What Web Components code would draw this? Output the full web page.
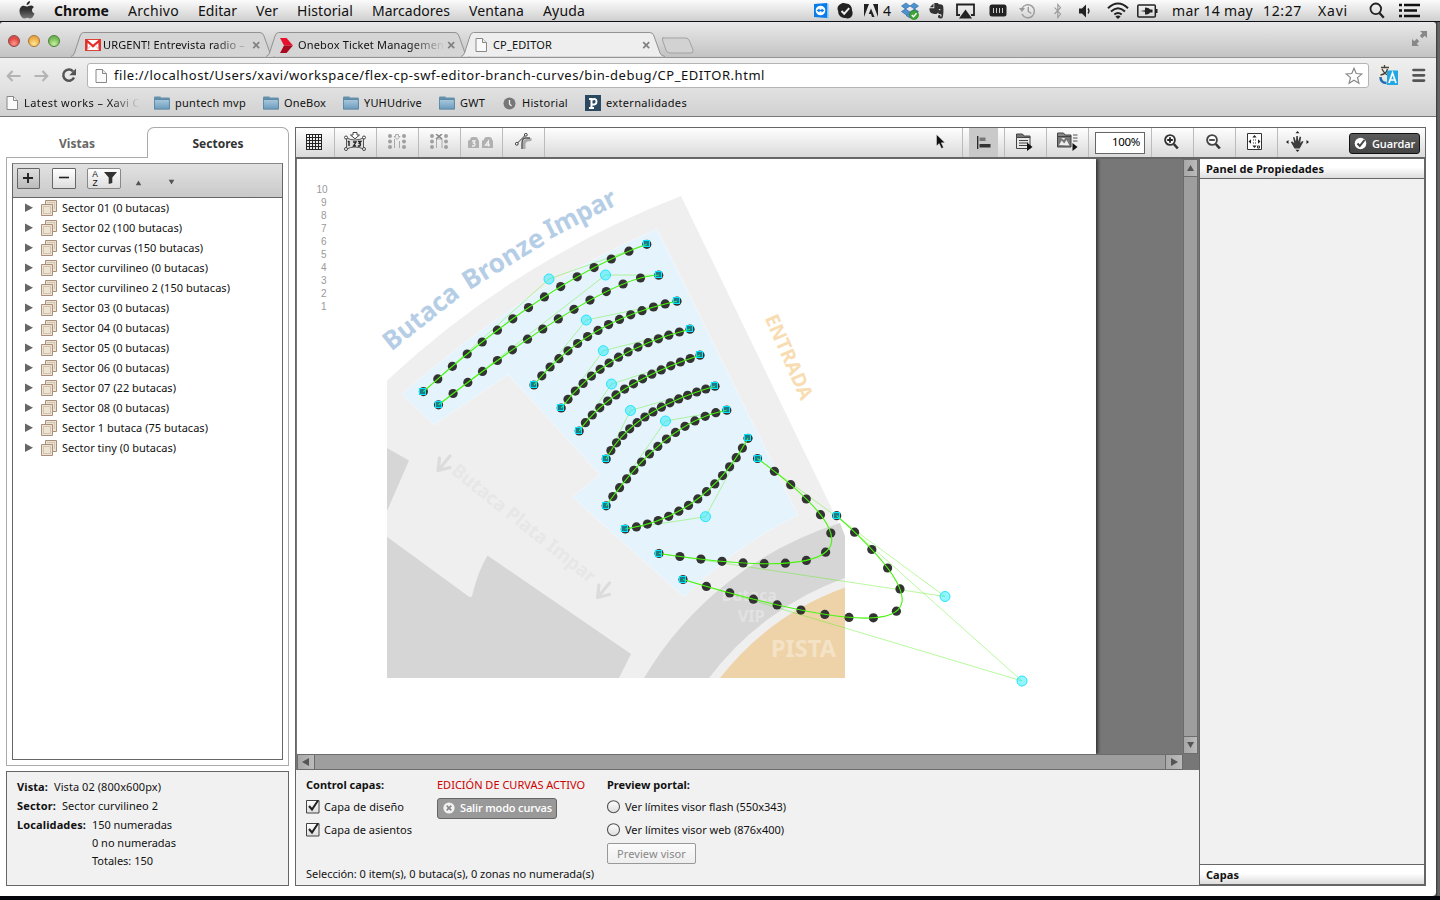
<!DOCTYPE html>
<html lang="es">
<head>
<meta charset="utf-8">
<title>CP_EDITOR</title>
<style>
html,body{margin:0;height:100%;overflow:hidden;background:#04060c}
</style>
</head>
<body>
<desk-top></desk-top>
<script>
const LUCIDA = '"Noto Sans","Open Sans",sans-serif';
function define(name, html, setup) {
  const tpl = document.createElement('template');
  tpl.innerHTML = html;
  customElements.define(name, class extends HTMLElement {
    connectedCallback() {
      if (this.shadowRoot) return;
      this.attachShadow({mode: 'open'}).appendChild(tpl.content.cloneNode(true));
      if (setup) setup(this, this.shadowRoot);
    }
  });
}

/* Text label with a fixed advance width: tracking is adjusted to fill it. */
customElements.define('t-x', class extends HTMLElement {
  connectedCallback() {
    if (this.shadowRoot) return;
    const r = this.attachShadow({mode: 'open'});
    r.innerHTML = '<style>:host{display:block;flex:none;white-space:pre;line-height:16px}span{display:inline-block}</style><span></span>';
    const s = r.querySelector('span');
    s.textContent = this.getAttribute('t');
    const w = +this.getAttribute('w');
    if (w) {
      this.style.width = w + 'px';
      const m = s.getBoundingClientRect().width;
      s.style.letterSpacing = ((w - m) / s.textContent.length).toFixed(3) + 'px';
    }
  }
});

const ICONS = {
  apple: [16,18,'<defs><linearGradient id="g" x2="0" y2="1"><stop offset="0" stop-color="#222"/><stop offset=".5" stop-color="#333"/><stop offset="1" stop-color="#777"/></linearGradient></defs><path fill="url(#g)" d="M11 0c.3 2-1.400 4-3.400 4.100C7.300 2.300 9 .4 11 0zM14.800 6.200c-2.700 1.700-2.200 5.100.7 6.300-.7 2.100-2.200 5-3.900 5-1.300 0-1.700-.8-3.300-.8s-2.100.8-3.300.8C3 17.500.5 13.500.5 10c0-3.300 2-5.300 4.200-5.300 1.500 0 2.500.9 3.600.9 1 0 2.200-1.100 4-1 1.100.1 2 .6 2.500 1.600z"/>'],
  team: [15,16,'<path fill="#0b7bea" d="M0 1l13-1v15l-13-1z"/><path fill="#7cc4ff" d="M13 0l1.500 1v15l-1.500-1z"/><circle cx="6.500" cy="7.500" r="4.800" fill="#fff"/><path fill="#0b7bea" d="M2.500 7.500l3-2v1.300h2V5.500l3 2-3 2V8.200h-2v1.300z"/>'],
  skype: [16,16,'<path fill="#222" d="M4.500.5c2-.9 3.500-.2 4.500 0 4 .2 6.300 3.500 6 7 .9 2 .9 4-.5 6-2 2.500-4.500 2-6 1.500C4 15 1 12 1.200 8.300-.3 5.500.5 2 4.500.5z"/><path d="M4.500 8l2.700 2.700 5-5.500" fill="none" stroke="#eee" stroke-width="2"/>'],
  adobe: [14,14,'<path fill="#222" d="M0 0h5L0 13zM9 0h5v13zM7 4.500L10.500 13H8l-1-3H4.700z"/>'],
  drop: [18,18,'<path fill="#4b93d1" stroke="#27629c" stroke-width=".6" d="M5 1l4 3-4.500 3L.5 4zM13 1l-4 3 4.500 3 4-3zM.5 9.500l4-2.500L9 10l-4 2.800zM17.500 9.500l-4-2.500L9 10l4 2.800zM5 13.500l4-2.700 4 2.700-4 2.500z"/><circle cx="13" cy="13" r="4.500" fill="#3fa535" stroke="#2a7a22" stroke-width=".6"/><path d="M10.800 13l1.700 1.700 3-3.400" fill="none" stroke="#fff" stroke-width="1.400"/>'],
  ever: [15,16,'<path fill="#333" d="M4.500.5L.8 4.300h3.700zM5.300 0h3.500l1 1.300c4 .2 4.400 1 4.500 3 .3 3 .1 7-.5 9.700-.5 2-4.500 2.100-4.800.1-.1-1.600.5-2.300 2.200-2.100v1.500h1.200c.4-1.500 0-2.500-1.400-2.600-1.300 0-1.500-.4-2-1.500-.8 1.600-2.500 1.700-4.500 1.300C1.500 10.300.5 9 .4 5.200h4.900z"/><path fill="#ddd" d="M9.800 6q1.500-.3 2 1.200-1-.4-2 0z"/>'],
  air: [19,16,'<path d="M4 12H1V1.500h17V12h-3" fill="none" stroke="#222" stroke-width="1.800"/><path fill="#222" d="M9.500 6.500l6.500 9H3z"/>'],
  mem: [18,15,'<rect x=".5" y="1.500" width="17" height="12" rx="2.500" fill="#222"/><path d="M4.500 5v5M7.500 5v5M10.500 5v5M13.500 5v5" stroke="#ccc" stroke-width="1"/>'],
  time: [17,16,'<path d="M3 5.500A6.500 6.500 0 1 1 3 11M9.300 4v4.500l3 2" fill="none" stroke="#999" stroke-width="1.400"/><path fill="#999" d="M0 5h6L3 9z"/>'],
  blue: [8,16,'<path d="M.5 4.500l6 6.500-2.700 3.500V1.500l2.700 3.200-6 6.300" fill="none" stroke="#999" stroke-width="1.100"/>'],
  vol: [12,14,'<path fill="#222" d="M0 4.500h3L7 .5v13l-4-4H0z"/><path d="M9 4.500q2 2.500 0 5" fill="none" stroke="#222" stroke-width="1.300"/>'],
  wifi: [22,17,'<path d="M1 6.300q10-9.500 20 0M4 9.500q7-6.500 14 0M7.300 12.600q3.700-3.300 7.400 0" fill="none" stroke="#222" stroke-width="2"/><path fill="#222" d="M11 17l-2.600-2.500q2.600-2 5.200 0z"/>'],
  batt: [21,14,'<rect x=".8" y="1" width="17.500" height="12" rx="1" fill="none" stroke="#222" stroke-width="1.500"/><path fill="#222" d="M19 5h1.500v4H19zM3.500 7l4.500-.8V3.500q4 0 5 2h2.500v3H13q-1 2-5 2V7.800z"/>'],
  srch: [16,17,'<circle cx="6.800" cy="6.800" r="5.300" fill="none" stroke="#222" stroke-width="1.800"/><path d="M10.500 11l4.300 4.800" stroke="#222" stroke-width="2.300"/>'],
  list: [21,15,'<path d="M0 2h3M0 7.500h3M0 13h3M5 2h16M5 7.500h13M5 13h16" stroke="#111" stroke-width="2.600"/>'],
  gmail: [16,12,'<rect x=".5" y=".5" width="15" height="11" fill="#fff" stroke="#d9443a"/><path d="M1.500 11.500V1.500L8 7.200l6.500-5.700v10" fill="none" stroke="#e0302d" stroke-width="2.200"/><path d="M2 11l4-5M14 11l-4-5" stroke="#f3b5b0"/>'],
  one: [13,15,'<path fill="#e8112d" d="M0 0h6.500L13 7.500H4z"/><path fill="#a80a22" d="M0 15h6.500L13 7.500H4z"/>'],
  page: [12,14,'<path fill="#fafafa" stroke="#888" d="M1 .5h6.500l4 4v9H1z"/><path fill="#eee" stroke="#888" d="M7.500.5v4h4"/>'],
  x: [9,9,'<path d="M1.200 1.200l6 6M7.200 1.200l-6 6" stroke="#808080" stroke-width="1.700"/>'],
  back: [15,12,'<path d="M6.500 1L1.800 6l4.700 5M2 6h12.500" fill="none" stroke="#b4b4b4" stroke-width="2.200"/>'],
  fwd: [15,12,'<path d="M8.500 1l4.700 5-4.700 5M13 6H.5" fill="none" stroke="#b4b4b4" stroke-width="2.200"/>'],
  reload: [16,15,'<path d="M12 3.300A5.600 5.600 0 1 0 13 9.500" fill="none" stroke="#555" stroke-width="2.500"/><path fill="#555" d="M15 .5v6.800H8.300z"/>'],
  star: [18,18,'<path fill="#fff" stroke="#888" stroke-width="1.200" d="M9 1.200l2.200 5.300 5.700.4-4.400 3.700 1.400 5.600L9 13.200l-4.900 3 1.400-5.600L1.100 6.900l5.700-.4z"/>'],
  trans: [19,21,'<path fill="#f0ece2" d="M0 0h11v13H0z"/><path d="M2 2.500h8M5.500 0v3M3 4q3 6 7 6M8.500 4q-1 5-7 6" fill="none" stroke="#444" stroke-width="1.300"/><path fill="#20a8e4" d="M8 5.500h11V20H8z"/><path d="M10 18l3.500-10 3.500 10M11.200 15h4.600" fill="none" stroke="#fff" stroke-width="1.700"/><path d="M1.500 12q0 6 6 6" fill="none" stroke="#2070b0" stroke-width="2.500"/>'],
  burger: [14,15,'<path d="M1.500 2h10.500M1.500 7.300h10.500M1.500 12.600h10.500" stroke="#555" stroke-width="2.700" stroke-linecap="round"/>'],
  full: [15,15,'<path fill="#888" d="M8 0h7v7l-2.300-2.300-2.500 2.500L7.800 4.800l2.500-2.500zM0 8v7h7l-2.300-2.300 2.500-2.500-2.400-2.400-2.500 2.500z"/>'],
  folder: [16,14,'<defs><linearGradient id="g" x2="0" y2="1"><stop offset="0" stop-color="#a9c9de"/><stop offset="1" stop-color="#6c9cbd"/></linearGradient></defs><path fill="#6691ad" d="M0 1.500Q0 .5 1 .5h5q.8 0 1 1h8q.8 0 .8.800V13H0z"/><path fill="url(#g)" stroke="#55809d" stroke-width=".8" d="M.4 3.500h15v9.700H.4z"/>'],
  clock: [13,13,'<circle cx="6.500" cy="6.500" r="6" fill="#777"/><path d="M6.500 3v4l2 2" fill="none" stroke="#eee" stroke-width="1.300"/>'],
  pin: [16,16,'<path fill="#2b4a60" d="M0 0h16v16H0z"/><path fill="none" stroke="#fff" stroke-width="2" d="M4 4h2.500v8.500M4 13h5M6.500 5q5-2.500 5 1.500t-5 2.800"/>'],
  stack: [16,16,'<g stroke="#a98f7b" fill="#ece3d3"><path d="M4.500.5h11v11h-11z"/><path d="M.5 4.500h11v11H.5z"/></g><path d="M6.500 2.500h7v7M2.500 6.500h7v7h-7z" fill="none" stroke="#b9a48c" stroke-dasharray="1 1"/>'],
  grid: [16,16,'<path d="M.5 0v16M3.500 0v16M6.500 0v16M9.500 0v16M12.500 0v16M15.500 0v16M0 .5h16M0 3.500h16M0 6.500h16M0 9.500h16M0 12.500h16M0 15.500h16" stroke="#222"/>'],
  num: [22,19,'<path d="M9 .5h4v2.500h2.500L11 6.800 6.500 3H9z" fill="#fff" stroke="#444"/><path d="M2.500 6Q11 10 19.500 6v11Q11 13 2.500 17z" fill="#ddd" stroke="#555"/><path d="M5 9v5M4 10l1-1M9 10h3l-2.500 4H12M14 9.500h2.800l-1.500 1.800q2 .5.500 2.700h-2" fill="none" stroke="#222" stroke-width="1.400"/><g fill="#fff" stroke="#444"><circle cx="2" cy="5.500" r="1.500"/><circle cx="20" cy="5.500" r="1.500"/><circle cx="2" cy="17" r="1.500"/><circle cx="20" cy="17" r="1.500"/></g>'],
  cola: [18,15,'<g fill="#a0a0a0"><circle cx="2" cy="2" r="2"/><circle cx="2" cy="7.500" r="2"/><circle cx="2" cy="13" r="2"/><circle cx="16" cy="2" r="2"/><circle cx="16" cy="7.500" r="2"/><circle cx="16" cy="13" r="2"/></g><path d="M6.500 14V5M11.500 14V7M7.500.5h3v2H12L9 5.500 6 2.500h1.500z" fill="#eee" stroke="#aaa"/>'],
  colx: [18,15,'<g fill="#a0a0a0"><circle cx="2" cy="2" r="2"/><circle cx="2" cy="7.500" r="2"/><circle cx="2" cy="13" r="2"/><circle cx="16" cy="2" r="2"/><circle cx="16" cy="7.500" r="2"/><circle cx="16" cy="13" r="2"/></g><path d="M6.500 14V5h5.500v9" fill="none" stroke="#aaa"/><path d="M6 0l6 5M12 0L6 5" stroke="#888" stroke-width="1.600"/>'],
  seats: [25,12,'<path fill="#b0b0b0" d="M2 3q0-3 3-3h2q3 0 3 3 1 0 1 1v7H0V4q0-1 2-1zM16 3q0-3 3-3h2q3 0 3 3 1 0 1 1v7H14V4q0-1 2-1z"/><path d="M4 4h3L5.500 6q3 .5.500 3H4M20.500 9.500V4L17.500 8h4.500" fill="none" stroke="#eee" stroke-width="1.300"/>'],
  curve: [17,17,'<path d="M9 16V11q0-4.500 7.500-4.500" fill="none" stroke="#aaa" stroke-width="3"/><path d="M7 16v-5Q7 5.500 10 5h5" fill="none" stroke="#555" stroke-width="1.400"/><path d="M2 10.500L10.500 2" stroke="#333"/><circle cx="1.800" cy="10.800" r="1.400" fill="#fff" stroke="#333"/><circle cx="10.800" cy="1.800" r="1.400" fill="#fff" stroke="#333"/>'],
  cursor: [9,15,'<path fill="#111" stroke="#fff" stroke-width=".4" d="M.5.5v11.500l2.700-2.500L5.500 14.500l2-.9-2.200-4.800H9z"/>'],
  align: [14,13,'<path d="M.7 0v13" stroke="#222" stroke-width="1.300"/><path d="M2.500 1.500h6v3.500h-6z" fill="#777"/><path d="M2.500 8h11v3.500h-11z" fill="#333"/>'],
  lst: [17,18,'<path fill="#777" stroke="#444" d="M.5 1h6l1.500 2h6v2H.5z"/><path fill="#e8e8e8" stroke="#444" d="M.5 4.500h13.500v11H.5z"/><path d="M3 7.500h9M3 10h9M3 12.500h9" stroke="#444" stroke-width="1.200"/><path fill="#111" d="M11 9.500l5.500 4.500-5.500 4z"/>'],
  img: [21,19,'<path fill="#888" stroke="#444" d="M.5 1h6L8 3h6v2H.5z"/><path fill="#777" stroke="#444" d="M.5 4.500H14v10.500H.5z"/><path fill="#eee" d="M2 13l2.700-4.500 2.500 3L9.500 8l3 5.500zM4 6h4l-1 2z"/><path d="M16 3h4.500M16 6h4.500M16 9h4.500" stroke="#555"/><path fill="#111" d="M15.500 11l5 4-5 4z"/>'],
  zin: [15,16,'<circle cx="6" cy="6" r="4.900" fill="#fff" stroke="#333" stroke-width="1.900"/><path d="M6 3.200v5.600M3.200 6h5.600" stroke="#222" stroke-width="1.800"/><path d="M9.800 10l4 4.500" stroke="#333" stroke-width="2.600"/>'],
  zout: [15,16,'<circle cx="6" cy="6" r="4.900" fill="#fff" stroke="#444" stroke-width="1.900"/><path d="M3.200 6h5.600" stroke="#222" stroke-width="1.600"/><path d="M9.800 10l4 4.500" stroke="#333" stroke-width="2.600"/>'],
  fit: [15,17,'<path d="M.5.5h14v16H.5z" fill="#fff" stroke="#333"/><path d="M7.500 2L5.300 4.500h4.400zM7.500 15l-2.200-2.500h4.400zM1.500 8.500L4 6.300v4.400zM13.500 8.500L11 6.300v4.400z" fill="#222"/><path d="M6 7h1M8 7h1M6 10h1M8 10h1" stroke="#333" fill="none"/><path d="M10.500 13h2v2h-2z" fill="#fff" stroke="#333"/>'],
  hand: [23,21,'<path fill="#3c3c3c" d="M8.500 17.500L4.800 11l1.700-.5 1.800 1.800-1.300-6 1.300-.3 1.700 4.500.3-5.500h1.500l.4 5.500 1.500-5 1.400.4-.9 6 2-2 1.300.7-3.800 7z"/><path fill="#222" d="M11.500 0l2 2.200h-4zM11.500 21l2-2.200h-4zM0 11l2.500-2v4zM23 11l-2.500-2v4z"/>'],
  ok: [13,13,'<circle cx="6.500" cy="6.500" r="5.800" fill="#fff"/><path d="M3.500 6.500l2.300 2.500 4.700-6" fill="none" stroke="#444" stroke-width="2"/>'],
  no: [12,12,'<circle cx="6" cy="6" r="5.600" fill="#f2f2f2"/><path d="M3.700 3.700l4.600 4.600M8.300 3.700L3.700 8.300" stroke="#888" stroke-width="1.700"/>'],
  plus: [11,11,'<path d="M5 0v10M0 5h10" stroke="#222" stroke-width="1.900"/>'],
  minus: [11,11,'<path d="M0 4.500h10" stroke="#222" stroke-width="1.600"/>'],
  funnel: [13,12,'<path fill="#333" d="M0 0h13L8.300 5.500v5.500L4.700 12V5.500z"/>'],
  check: [15,15,'<defs><linearGradient id="g" x2="0" y2="1"><stop offset="0" stop-color="#fff"/><stop offset="1" stop-color="#ddd"/></linearGradient></defs><path d="M.5 1.500h12.500v12.500H.5z" fill="url(#g)" stroke="#444"/><path d="M3 7l3 3.500L12 1.500" fill="none" stroke="#222" stroke-width="2"/>'],
  radio: [14,14,'<defs><linearGradient id="g" x2="0" y2="1"><stop offset="0" stop-color="#fff"/><stop offset="1" stop-color="#ddd"/></linearGradient></defs><circle cx="6.500" cy="6.700" r="6" fill="url(#g)" stroke="#555" stroke-width="1.100"/>'],
  right: [8,10,'<path fill="#666" d="M0 .5l8 4.200L0 9z"/>'],
  up: [7,6,'<path fill="#555" d="M3.500 0L7 6H0z"/>'],
  down: [7,6,'<path fill="#555" d="M3.500 6L7 0H0z"/>'],
  left: [8,8,'<path fill="#555" d="M7 0v8L0 4z"/>'],
  rt: [8,8,'<path fill="#555" d="M1 0v8l7-4z"/>']
};
customElements.define('i-x', class extends HTMLElement {
  connectedCallback() {
    if (this.shadowRoot) return;
    const [w, h, s] = ICONS[this.getAttribute('n')];
    this.attachShadow({mode: 'open'}).innerHTML =
      `<style>:host{display:block;flex:none;width:${w}px;height:${h}px}svg{display:block}</style><svg width="${w}" height="${h}" viewBox="0 0 ${w} ${h}">${s}</svg>`;
  }
});

/* ---- macOS menu bar ---- */
define('menu-bar', `<style>
:host{display:flex;align-items:center;height:21px;border-bottom:1px solid #0c1016;background:linear-gradient(#fbfbfb,#cfcfcf);font:14px ${LUCIDA};color:#111;box-sizing:content-box}
nav{display:flex;gap:19px;margin-left:19px}
aside{display:flex;align-items:center;flex:1}
</style>
<i-x n="apple" style="margin:0 0 1px 19px"></i-x>
<nav><t-x t="Chrome" w="55" style="font-weight:700"></t-x><t-x t="Archivo" w="51"></t-x><t-x t="Editar" w="39"></t-x><t-x t="Ver" w="22"></t-x><t-x t="Historial" w="56"></t-x><t-x t="Marcadores" w="78"></t-x><t-x t="Ventana" w="55"></t-x><t-x t="Ayuda" w="42"></t-x></nav>
<aside>
<i-x n="team" style="margin-left:229px"></i-x><i-x n="skype" style="margin-left:8px"></i-x><i-x n="adobe" style="margin-left:11px"></i-x><t-x t="4" w="8" style="margin-left:5px"></t-x>
<i-x n="drop" style="margin-left:10px"></i-x><i-x n="ever" style="margin-left:10px"></i-x><i-x n="air" style="margin-left:12px"></i-x><i-x n="mem" style="margin-left:14px"></i-x><i-x n="time" style="margin-left:12px"></i-x><i-x n="blue" style="margin-left:18px"></i-x><i-x n="vol" style="margin-left:17px"></i-x><i-x n="wifi" style="margin-left:16px"></i-x><i-x n="batt" style="margin-left:8px"></i-x>
<t-x t="mar 14 may" w="81" style="margin-left:14px"></t-x><t-x t="12:27" w="39" style="margin-left:10px"></t-x><t-x t="Xavi" w="30" style="margin-left:16px"></t-x>
<i-x n="srch" style="margin-left:21px"></i-x><i-x n="list" style="margin-left:14px"></i-x>
</aside>`);

/* ---- browser ---- */
define('browser-tab', `<style>
:host{display:block;position:relative;flex:none;width:204px;height:25px;margin-right:-9px;font:11px ${LUCIDA};color:#111}
:host([active]){z-index:2;height:26px;margin-bottom:-1px}
svg{position:absolute;inset:0}
div{position:relative;display:flex;align-items:center;height:24px;padding-top:1px}
.i{width:18px;margin-left:14px;display:flex}
.t{width:147px;margin-right:2px}
:host([fade]) .t{-webkit-mask:linear-gradient(90deg,#000 76%,transparent 100%)}
</style><svg width="204" height="26"><path d="M0 24.500Q2.500 24 3.500 21L9 4Q10 .5 12.500.5H189Q192 .5 193 4L199 21Q200 24 204 24.500" stroke="#929292"/></svg><div><span class="i"></span><span class="t"></span><i-x n="x"></i-x></div>`,
(h, r) => {
  const p = r.querySelector('path'), a = h.hasAttribute('active');
  p.setAttribute('fill', a ? '#eeeeee' : '#d5d5d5');
  r.querySelector('.i').innerHTML = `<i-x n="${h.getAttribute('icon')}"></i-x>`;
  r.querySelector('.t').innerHTML = `<t-x t="${h.getAttribute('t')}" w="${h.getAttribute('w')}"></t-x>`;
});
define('tab-strip', `<style>
:host{display:flex;align-items:flex-end;height:35px;border-bottom:1px solid #949494;background:linear-gradient(#e9e9e9,#c3c3c3);border-radius:4px 4px 0 0;position:relative}
.l{display:flex;gap:8px;margin:0 11px 10px 8px}
.l i{width:12px;height:12px;border-radius:50%;box-sizing:border-box;border:1px solid #8a4a45;background:radial-gradient(circle at 50% 75%,#ff9a90,#e0453e 60%,#c66)}
.l i:nth-child(2){border-color:#a5752c;background:radial-gradient(circle at 50% 80%,#ffe79a,#efae48 60%,#dfa050)}
.l i:nth-child(3){border-color:#4c7f38;background:radial-gradient(circle at 50% 80%,#c8f0a0,#78bd58 60%,#6aa550)}
.n{margin:0 0 3px 5px}
.f{margin:0 9px 11px auto}
browser-tab{align-self:flex-end}
</style><div class="l"><i></i><i></i><i></i></div>
<browser-tab icon="gmail" t="URGENT! Entrevista radio –" w="142" fade></browser-tab><browser-tab icon="one" t="Onebox Ticket Managemen" w="146" fade></browser-tab><browser-tab active icon="page" t="CP_EDITOR" w="59"></browser-tab>
<svg class="n" width="34" height="17"><path d="M1.500 1h23q3 0 4 3l3.500 9q1 3-2 3H9q-3 0-4-3L1.500 3Q1 1 2.500 1z" fill="#d2d2d2" stroke="#a2a2a2"/></svg>
<i-x class="f" n="full"></i-x>`);
define('nav-bar', `<style>
:host{display:block;height:58px;background:linear-gradient(#f0f0f0,#e2e2e2 50%,#d1d1d1);border-bottom:1px solid #777;color:#111}
.a{display:flex;align-items:center;height:35px}
.o{display:flex;align-items:center;box-sizing:border-box;width:1282px;height:25px;border:1px solid #b4b4b4;border-radius:3px;background:#fff;font:13px ${LUCIDA};margin-left:10px;padding-left:7px}
.b{display:flex;align-items:center;height:20px;font:11px ${LUCIDA}}
</style>
<div class="a"><i-x n="back" style="margin-left:6px"></i-x><i-x n="fwd" style="margin-left:13px"></i-x><i-x n="reload" style="margin-left:12px"></i-x>
<div class="o"><i-x n="page"></i-x><t-x t="file://localhost/Users/xavi/workspace/flex-cp-swf-editor-branch-curves/bin-debug/CP_EDITOR.html" w="651" style="margin:-2px 0 0 7px"></t-x><i-x n="star" style="margin:0 5px 0 auto"></i-x></div>
<i-x n="trans" style="margin-left:10px"></i-x><i-x n="burger" style="margin-left:14px"></i-x></div>
<div class="b"><i-x n="page" style="margin-left:6px"></i-x><t-x t="Latest works – Xavi C" w="116" style="margin-left:6px;-webkit-mask:linear-gradient(90deg,#000 75%,transparent 100%)"></t-x>
<i-x n="folder" style="margin-left:14px"></i-x><t-x t="puntech mvp" w="71" style="margin-left:5px"></t-x>
<i-x n="folder" style="margin-left:17px"></i-x><t-x t="OneBox" w="42" style="margin-left:5px"></t-x>
<i-x n="folder" style="margin-left:17px"></i-x><t-x t="YUHUdrive" w="58" style="margin-left:5px"></t-x>
<i-x n="folder" style="margin-left:17px"></i-x><t-x t="GWT" w="25" style="margin-left:5px"></t-x>
<i-x n="clock" style="margin-left:18px"></i-x><t-x t="Historial" w="46" style="margin-left:6px"></t-x>
<i-x n="pin" style="margin-left:17px"></i-x><t-x t="externalidades" w="81" style="margin-left:5px"></t-x></div>`);

/* ---- left side ---- */
define('sector-row', `<style>:host{display:flex;align-items:center;height:20px}</style>
<i-x n="right" style="margin-left:12px"></i-x><i-x n="stack" style="margin:0 5px 0 8px"></i-x><slot></slot>`);
define('side-panel', `<style>
:host{display:flex;flex-direction:column;width:283px;font:11px ${LUCIDA};color:#111}
.tabs{display:flex;height:30px;font-weight:700;font-size:12px}
.tabs div{display:flex;justify-content:center;align-items:center}
.v{width:141px;color:#666;padding:4px 0 0 1px;box-sizing:border-box}
.s{width:142px;box-sizing:border-box;border:1px solid #aaa;border-bottom:0;border-radius:7px 7px 0 0;background:#fff;margin-bottom:-1px;z-index:1;padding-top:1px;color:#333}
.box{box-sizing:border-box;height:609px;border:1px solid #aaa;padding:5px}
.in{box-sizing:border-box;height:597px;border:1px solid #666;border-top-color:#888}
.tb{display:flex;height:33px;border-bottom:1px solid #666;background:linear-gradient(#e2e2e2,#c9c9c9);align-items:flex-start}
.btn{display:flex;align-items:center;justify-content:center;box-sizing:border-box;height:21px;margin-top:4px;border:1px solid #666;border-radius:1px;background:linear-gradient(#fff,#ddd)}
.az{font:8.500px "Liberation Sans",sans-serif;width:7px;text-align:center;margin-right:5px;display:grid;grid-template-rows:9px 9px;line-height:9px}
.info{box-sizing:border-box;height:115px;margin-top:5px;border:1px solid #666;background:#f1f1f1;padding:7px 10px}
.r{display:flex;height:19px}.q{padding-left:75px;height:18px;display:flex}
b{font-weight:700;display:flex}
</style>
<div class="tabs"><div class="v"><t-x t="Vistas" w="36"></t-x></div><div class="s"><t-x t="Sectores" w="51"></t-x></div></div>
<div class="box"><div class="in"><div class="tb">
<span class="btn" style="width:23px;margin-left:4px;background:linear-gradient(#ddd,#bbb)"><i-x n="plus"></i-x></span><span class="btn" style="width:24px;margin-left:12px"><i-x n="minus"></i-x></span>
<span class="btn" style="width:34px;margin-left:11px;border-color:#888;border-radius:2px;"><span class="az"><span>A</span><span>Z</span></span><i-x n="funnel" style="margin-top:-1px"></i-x></span>
<i-x n="up" style="margin:16px 0 0 14px;transform:scale(.85)"></i-x><i-x n="down" style="margin:15px 0 0 26px;transform:scale(.85)"></i-x></div><div class="list"></div></div></div>
<div class="info">
<div class="r"><b><t-x t="Vista:" w="31"></t-x></b><t-x t="Vista 02 (800x600px)" w="107" style="margin-left:6px"></t-x></div>
<div class="r"><b><t-x t="Sector:" w="39"></t-x></b><t-x t="Sector curvilineo 2" w="96" style="margin-left:6px"></t-x></div>
<div class="r"><b><t-x t="Localidades:" w="69"></t-x></b><t-x t="150 numeradas" w="80" style="margin-left:6px"></t-x></div>
<div class="q" style="margin-top:-1px"><t-x t="0 no numeradas" w="84"></t-x></div><div class="q"><t-x t="Totales: 150" w="61"></t-x></div></div>`,
(h, r) => {
  r.querySelector('.list').innerHTML = [['01 (0',107],['02 (100',120],['curvas (150',141],['curvilineo (0',146],['curvilineo 2 (150',168],['03 (0',107],['04 (0',107],['05 (0',107],['06 (0',107],['07 (22',114],['08 (0',107],['1 butaca (75',146],['tiny (0',114]]
    .map(([t, w]) => `<sector-row><t-x t="Sector ${t} butacas)" w="${w}"></t-x></sector-row>`).join('');
});

/* ---- editor ---- */
define('tool-cell', `<style>:host{display:flex;flex:none;box-sizing:border-box;width:42px;height:29px;align-items:center;justify-content:center;border-right:1px solid #bbb;padding:0 2px 2px 0}
:host([last]){border:0;padding-right:4px}:host([on]){padding:0}:host([on]) span{background:#c9c9c9}
span{display:flex;width:29px;height:29px;align-items:center;justify-content:center}</style><span><slot></slot></span>`);
define('tool-bar', `<style>
:host{display:flex;height:29px;border-bottom:2px solid #666;background:linear-gradient(#fefefe,#dadada);font:11.500px ${LUCIDA};align-items:center}
.z{display:flex;align-items:center;justify-content:center;width:62px;height:29px;border-right:1px solid #bbb}
.z div{display:flex;justify-content:flex-end;align-items:center;box-sizing:border-box;width:50px;height:22px;border:1px solid #666;background:#fff;padding:0 4px 2px 0}
.g{display:flex;align-items:center;box-sizing:border-box;width:71px;height:21px;margin:2px 0 0 29px;border:1px solid #111;border-radius:3px;background:linear-gradient(#5a5a5a,#444);color:#fff;font:600 11px "Open Sans","Noto Sans",sans-serif;padding-left:4px}
</style>
<tool-cell style="width:39px"><i-x n="grid"></i-x></tool-cell><tool-cell><i-x n="num" style="margin-top:-1px"></i-x></tool-cell><tool-cell><i-x n="cola"></i-x></tool-cell><tool-cell><i-x n="colx"></i-x></tool-cell><tool-cell><i-x n="seats" style="margin-top:2px"></i-x></tool-cell><tool-cell style="padding-right:0"><i-x n="curve"></i-x></tool-cell>
<tool-cell style="margin-left:375px;width:43px"><i-x n="cursor"></i-x></tool-cell><tool-cell on><i-x n="align"></i-x></tool-cell><tool-cell><i-x n="lst"></i-x></tool-cell><tool-cell style="padding-right:0"><i-x n="img"></i-x></tool-cell>
<div class="z"><div><t-x t="100%" w="28"></t-x></div></div>
<tool-cell><i-x n="zin"></i-x></tool-cell><tool-cell><i-x n="zout"></i-x></tool-cell><tool-cell style="padding-right:4px"><i-x n="fit"></i-x></tool-cell><tool-cell last><i-x n="hand"></i-x></tool-cell>
<div class="g"><i-x n="ok"></i-x><t-x t="Guardar" w="43" style="margin-left:5px"></t-x></div>`);

/* Venue plan: seat rows are quadratic curves with evenly spaced seats. */
const ROWS = [
 [423.400,391.600,549,279,646.800,244.300],[438.500,404.800,605.500,275,658.700,275.200],[534,385,586.300,320,677,301.200],[561.200,408,603.300,350.700,690,329.200],[579.200,431,611.500,384,700,355.200],
 [606.200,459,630.500,410.500,715,386.200],[606.200,505.800,665.500,421,726.800,410.200],[625.300,529,705.500,516.700,748,438.300],[659,553.500,945,596.500,757.500,458.500],[683,579.500,1022,681,836.700,515.700]];
define('seat-map', `<style>:host{display:block;width:799px;height:595px;overflow:visible;position:relative;z-index:1}svg{display:block;overflow:visible}
text{font-family:"Noto Sans",sans-serif;font-weight:700}.n{font:400 10px "Liberation Sans",sans-serif;fill:#999}</style>
<svg width="799" height="595" viewBox="297 159 799 595">
<path fill="#efefef" d="M387 380.500Q516 260 681 196L845 536V678H387z"/>
<path fill="#e5f4fc" stroke="#f1f6f9" d="M402 394Q526 285 657 229L798 515Q733 547 684 597L572.500 497 600 474.500 508 374.500 434 425z"/>
<g fill="#d6d6d6"><path d="M387 448l22 12.500L387 511zM387 536.700L468 596q3 2 4 0Q478 571 487.500 555.500L631 654 619 678H387z"/>
<path d="M644 678A351 351 0 0 1 840 523l5 13v42A292 292 0 0 0 709 678z"/></g>
<path fill="#eed3a9" d="M720 678A278 278 0 0 1 845 587.500V678z"/>
<g fill="#b5cee6" font-size="26"><text transform="translate(391.500 351.500) rotate(-38.500)" textLength="89" lengthAdjust="spacingAndGlyphs">Butaca</text><text transform="translate(469 290.500) rotate(-31.500)" textLength="91" lengthAdjust="spacingAndGlyphs">Bronze</text><text transform="translate(550 239) rotate(-27)" textLength="77" lengthAdjust="spacingAndGlyphs">Impar</text></g>
<text fill="#f8ddb3" font-size="19.500" transform="translate(764.500 318) rotate(66.300)" textLength="91" lengthAdjust="spacingAndGlyphs">ENTRADA</text>
<text fill="#e7e7e7" font-size="19" transform="translate(450.200 473) rotate(38.500)" textLength="178" lengthAdjust="spacingAndGlyphs">Butaca Plata Impar</text>
<path id="ar" d="M450 456l-12 14.500M439.500 458l-1.500 12.500 12-3" fill="none" stroke="#dcdcdc" stroke-width="3.200" stroke-linecap="round" stroke-linejoin="round"/><use href="#ar" x="159.500" y="127"/>
<g fill="#e2e2e2"><text x="721.700" y="600.500" font-size="15.500" textLength="55">Butaca</text><text x="737.700" y="621.500" font-size="16.500" textLength="27">VIP</text></g>
<text x="771" y="657" font-size="24" fill="#f4e2c6" textLength="65" lengthAdjust="spacingAndGlyphs">PISTA</text>
<g id="nums"></g><g id="ctl" fill="none" stroke="#50f010" stroke-opacity=".4"></g><g id="seats" fill="#333"></g><g id="cur" fill="none" stroke="#46f50a" stroke-width="1.100"></g><g id="hd"></g></svg>`,
(h, r) => {
  const $ = id => r.getElementById(id);
  $('nums').innerHTML = [10,9,8,7,6,5,4,3,2,1].map((n, i) => `<text class="n" x="${n === 10 ? 327.500 : 326.500}" y="${193.200 + i * 13}" text-anchor="end">${n}</text>`).join('');
  $('cur').innerHTML = ROWS.map(p => `<path d="M${p[0]} ${p[1]}Q${p[2]} ${p[3]} ${p[4]} ${p[5]}"/>`).join('');
  $('ctl').innerHTML = ROWS.map(p => `<path d="M${p[0]} ${p[1]}L${p[2]} ${p[3]} ${p[4]} ${p[5]}"/>`).join('');
  let s = '';
  for (const c of $('cur').children) {
    const L = c.getTotalLength();
    for (let i = 0; i < 15; i++) { const q = c.getPointAtLength(L * i / 14); s += `<circle cx="${q.x.toFixed(1)}" cy="${q.y.toFixed(1)}" r="4.600"/>`; }
  }
  $('seats').innerHTML = s;
  const sq = (x, y) => `<rect x="${Math.round(x) - 3.500}" y="${Math.round(y) - 3.500}" width="6" height="6" fill="#00e5ff" fill-opacity=".4" stroke="#00e5ff"/>`;
  $('hd').innerHTML = ROWS.map(p => sq(p[0], p[1]) + sq(p[4], p[5]) + `<circle cx="${p[2]}" cy="${p[3]}" r="5" fill="#00e5ff" fill-opacity=".42" stroke="#1fe6fb"/>`).join('');
});
define('scroll-bar', `<style>
:host{display:flex;box-sizing:border-box;background:#9e9e9e;border:1px solid #6c6c6c;justify-content:space-between}
:host([v]){flex-direction:column;width:15px;height:595px}
:host(:not([v])){width:886px;height:16px}
span{display:flex;align-items:center;justify-content:center;background:linear-gradient(90deg,#a8a8a8,#bbb);width:16px;border:solid #6c6c6c;border-width:0 1px 0 0}
span:last-child{border-width:0 0 0 1px}
:host([v]) span{width:13px;height:16px;border-width:0 0 1px}
:host([v]) span:last-child{border-width:1px 0 0}
</style><span></span><span></span>`, (h, r) => {
  const v = h.hasAttribute('v'), [a, b] = r.querySelectorAll('span');
  a.innerHTML = `<i-x n="${v ? 'up' : 'left'}"></i-x>`; b.innerHTML = `<i-x n="${v ? 'down' : 'rt'}"></i-x>`;
});
define('work-area', `<style>
:host{display:flex;flex-direction:column;width:903px;font:11px ${LUCIDA};color:#111}
.c{display:flex;height:595px;background:#777;padding-left:1px}
.paper{background:#fff;width:799px;height:595px;box-shadow:2px 0 3px #333;clip-path:inset(0 -8px 0 0)}
.b{height:116px;background:#f1f1f1;box-sizing:border-box;padding:7px 10px 0}
.cols{display:flex;height:89px}.k{display:flex;flex-direction:column;align-items:flex-start}
.row{display:flex;align-items:center;height:23px;gap:4px}
b{display:flex;height:15px;font-weight:700}
.btn{display:flex;align-items:center;box-sizing:border-box;width:120px;height:21px;border:1px solid #666;border-radius:3px;background:#999;color:#fff;font:600 11px "Open Sans","Noto Sans",sans-serif;padding:0 0 1px 5px;gap:5px;margin-top:6px}
.pv{display:flex;align-items:center;justify-content:center;box-sizing:border-box;width:89px;height:21px;border:1px solid #999;border-radius:2px;background:linear-gradient(#fbfbfb,#eee);color:#888;margin-top:2px}
</style>
<div class="c"><div class="paper"><seat-map></seat-map></div><scroll-bar v style="margin-left:87px"></scroll-bar></div>
<div style="background:#777;padding-left:1px"><scroll-bar></scroll-bar></div>
<div class="b"><div class="cols">
<div class="k" style="width:131px"><b><t-x t="Control capas:" w="78"></t-x></b><div class="row" style="margin-top:3px"><i-x n="check"></i-x><t-x t="Capa de diseño" w="80" style="margin-left:-1px"></t-x></div><div class="row"><i-x n="check"></i-x><t-x t="Capa de asientos" w="88" style="margin-left:-1px"></t-x></div></div>
<div class="k" style="width:170px"><t-x t="EDICIÓN DE CURVAS ACTIVO" w="148" style="color:#c00;height:15px"></t-x><div class="btn"><i-x n="no"></i-x><t-x t="Salir modo curvas" w="92"></t-x></div></div>
<div class="k"><b><t-x t="Preview portal:" w="83"></t-x></b><div class="row" style="margin-top:3px"><i-x n="radio"></i-x><t-x t="Ver límites visor flash (550x343)" w="161"></t-x></div><div class="row"><i-x n="radio"></i-x><t-x t="Ver límites visor web (876x400)" w="159"></t-x></div><div class="pv"><t-x t="Preview visor" w="69"></t-x></div></div>
</div><t-x t="Selección: 0 item(s), 0 butaca(s), 0 zonas no numerada(s)" w="288"></t-x></div>`);
define('prop-panel', `<style>
:host{display:flex;flex-direction:column;flex:1;border-left:1px solid #666;border-right:1px solid #666;background:#f1f1f1;font:700 11px ${LUCIDA};color:#111}
div{display:flex;align-items:center;height:19px;padding-left:6px;background:linear-gradient(#fff 45%,#dcdcdc);border-bottom:1px solid #666}
.e{margin-top:auto;border-top:1px solid #666}
</style><div><t-x t="Panel de Propiedades" w="118"></t-x></div><div class="e"><t-x t="Capas" w="33"></t-x></div>`);
define('editor-frame', `<style>
:host{display:block;box-sizing:border-box;width:1131px;height:759px;border:1px solid #666}
.m{display:flex;height:726px}
</style><tool-bar></tool-bar><div class="m"><work-area></work-area><prop-panel></prop-panel></div>`);

define('desk-top', `<style>
:host{display:block;width:1440px;height:900px;background:linear-gradient(#04060c,#04060c) 0 896px/1440px 4px no-repeat,linear-gradient(90deg,#333 0,#666 2px,#606060 4px) 1436px 0/4px 900px no-repeat,#5f5f5f;overflow:hidden}
.w{width:1436px;height:874px;box-sizing:border-box;background:#fff;border-radius:4px 4px 4px 0}
.p{display:flex;padding:10px 0 0 6px;gap:6px}
</style><menu-bar></menu-bar><div class="w"><tab-strip></tab-strip><nav-bar></nav-bar><div class="p"><side-panel></side-panel><editor-frame></editor-frame></div></div>`);
</script>
</body>
</html>
